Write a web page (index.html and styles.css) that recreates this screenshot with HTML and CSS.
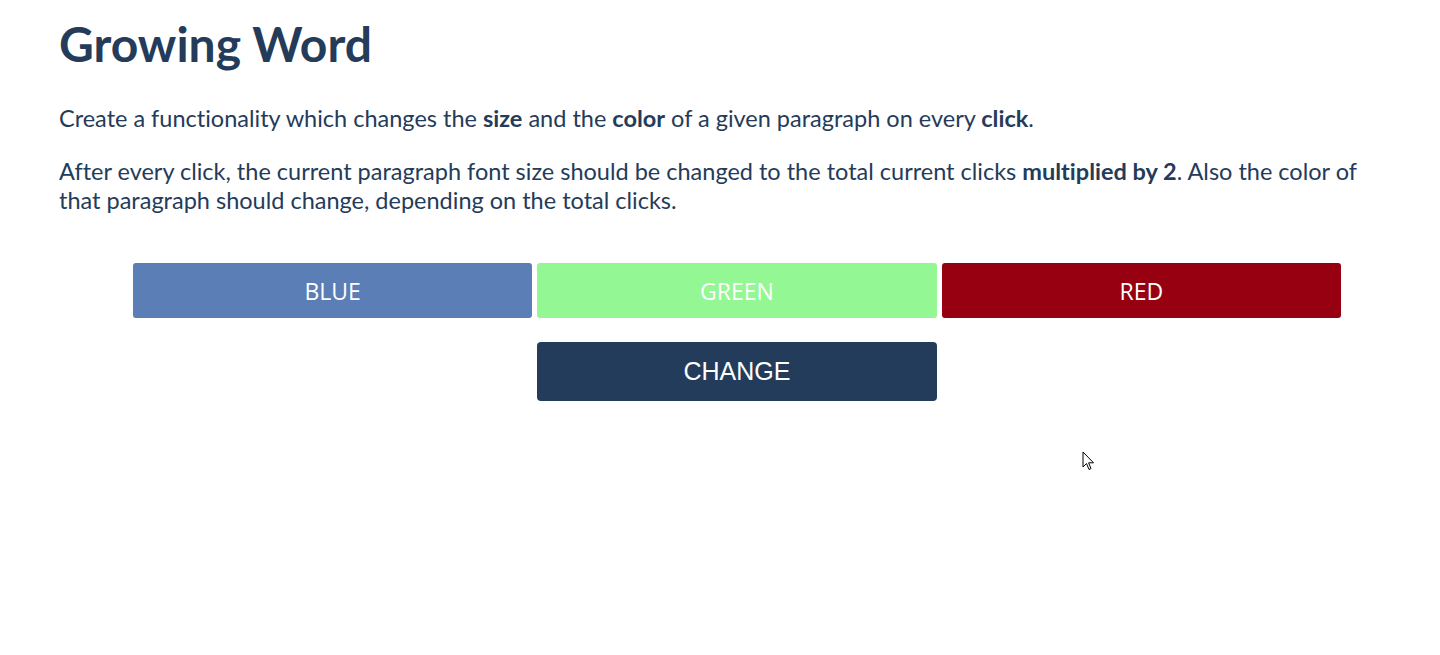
FILE: index.html
```html
<!DOCTYPE html>
<html>
<head>
<meta charset="utf-8">
<link rel="stylesheet" href="styles.css">
</head>
<body>
<main class="page">
  <h1 class="title">Growing Word</h1>
  <p class="text">Create a functionality which changes the <strong>size</strong> and the <strong>color</strong> of a given paragraph on every <strong>click</strong>.</p>
  <p class="text">After every click, the current paragraph font size should be changed to the total current clicks <strong>multiplied by 2</strong>. Also the color of that paragraph should change, depending on the total clicks.</p>
  <section class="controls">
    <div class="colors">
      <button class="btn btn-blue">BLUE</button>
      <button class="btn btn-green">GREEN</button>
      <button class="btn btn-red">RED</button>
    </div>
    <button class="btn-change">CHANGE</button>
  </section>
</main>
<svg class="cursor" width="14" height="21" viewBox="0 0 14 21"><path d="M1 1 L1 16 L4.5 12.5 L7 18.5 L9 17.6 L6.6 11.8 L11.5 11.8 Z" fill="#fff" stroke="#000" stroke-width="1"/></svg>
</body>
</html>
```
FILE: styles.css
```css
html, body { margin: 0; padding: 0; background: #fff; }
body { font-family: Lato, "Open Sans", sans-serif; color: #243b5a; font-variant-ligatures: none; }
.page { padding: 14px 0 0 59px; width: 1330px; }
.title { font-size: 48px; font-weight: 700; margin: 0 0 30px 0; line-height: 60px; }
.text { font-size: 23.5px; line-height: 29px; margin: 0 0 24px 0; }
.text strong { font-weight: 700; }
.controls { display: flex; flex-direction: column; align-items: center; width: 1208px; margin: 48px 0 0 74px; gap: 24px; }
.colors { display: flex; gap: 5px; width: 100%; }
.btn { flex: 1; height: 55px; border: none; border-radius: 3px; color: #fff; font-family: "Open Sans", sans-serif; font-size: 23px; padding: 0; }
.btn-blue { background: #5a7eb5; }
.btn-green { background: #93f793; }
.btn-red { background: #960010; }
.btn-change { width: 400px; height: 59px; border: none; border-radius: 4px; background: #243c5b; color: #fff; font-family: "Liberation Sans", Arial, sans-serif; font-size: 25px; padding: 0; }
.cursor { position: absolute; left: 1082px; top: 451px; }
```
